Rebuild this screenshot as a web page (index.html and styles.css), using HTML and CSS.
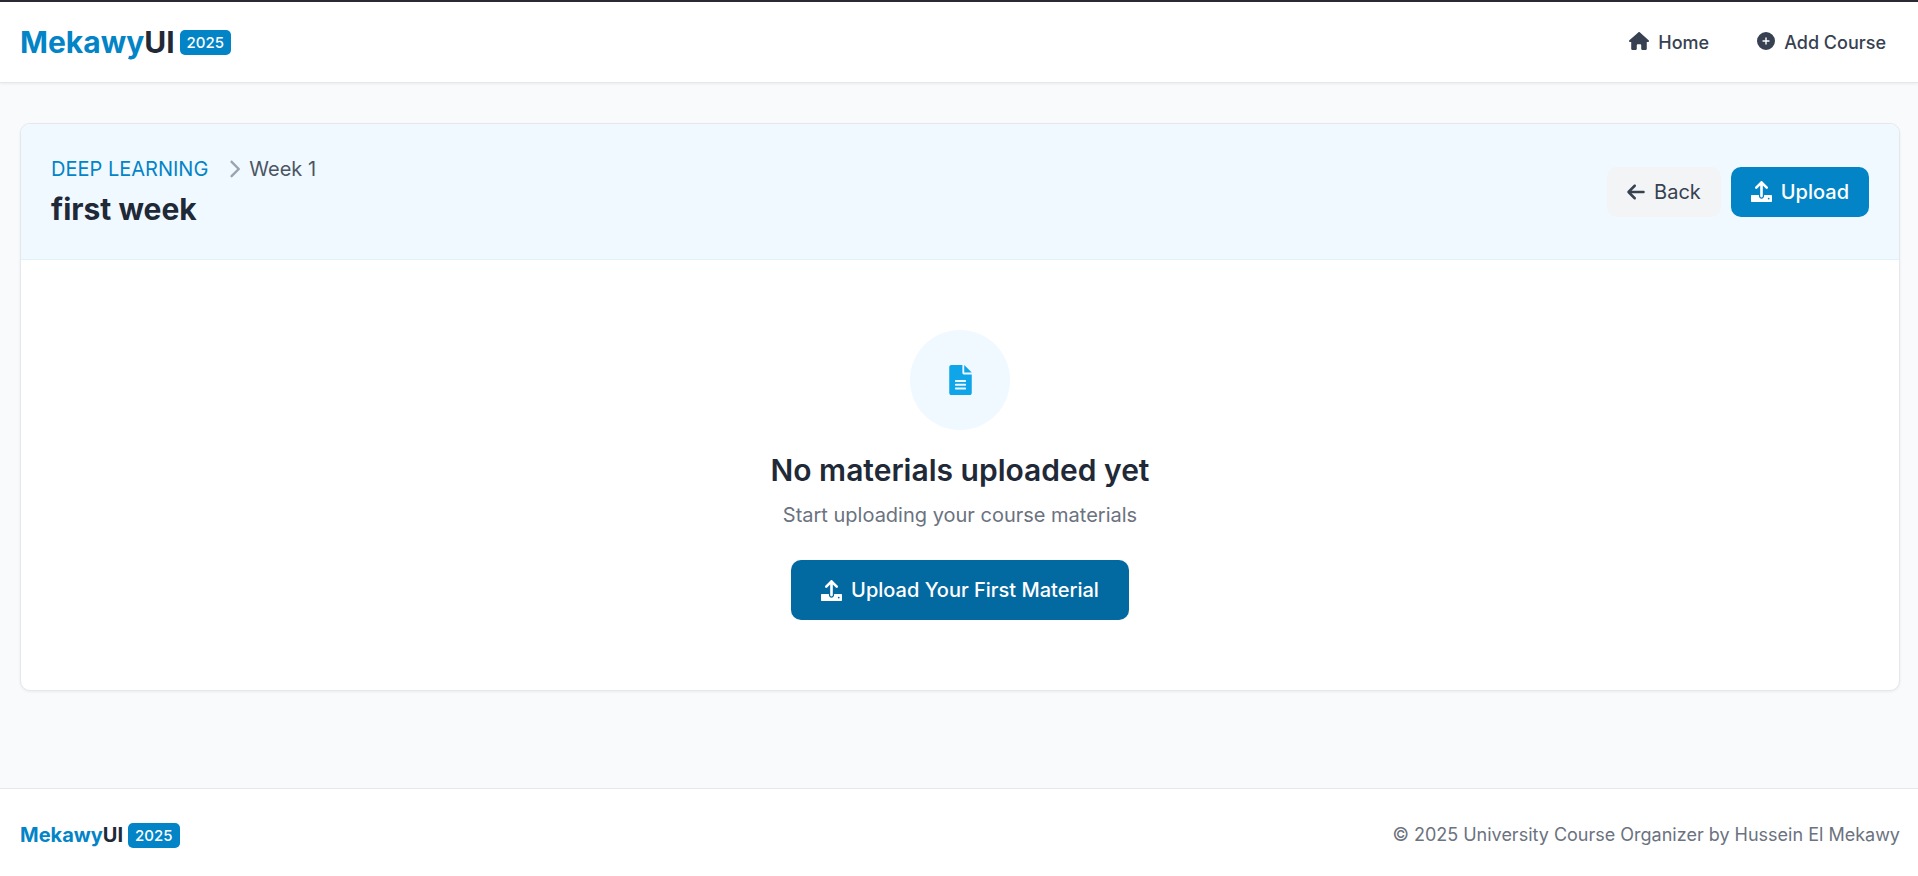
FILE: index.html
```html
<!DOCTYPE html>
<html lang="en">
<head>
<meta charset="utf-8">
<title>first week - MekawyUI</title>
<link rel="stylesheet" href="styles.css">
</head>
<body>
<header class="site-header">
  <a class="brand" href="#"><span class="brand-name"><span class="brand-accent">Mekawy</span>UI</span><span class="badge">2025</span></a>
  <nav class="nav">
    <a class="nav-link" href="#"><svg class="icon-home" viewBox="0 0 576 512" aria-hidden="true"><path d="M575.8 255.5c0 18-15 32.100-32 32.100h-32V488c0 13-11 24-24 24H376c-13 0-24-11-24-24V376c0-13-11-24-24-24h-80c-13 0-24 11-24 24v112c0 13-11 24-24 24H88c-13 0-24-11-24-24V287.600H32c-18 0-32-14-32-32.100 0-9 3-17 10-24L266.400 8c7-7 15-8 22-8s15 2 21 7l255.400 224.500c8 7 12 15 11 24z"/></svg>Home</a>
    <a class="nav-link" href="#"><svg class="icon-small" viewBox="0 0 512 512" aria-hidden="true"><path d="M256 512a256 256 0 1 0 0-512 256 256 0 1 0 0 512zM236 340v-64h-64a20 20 0 0 1 0-40h64v-64a20 20 0 0 1 40 0v64h64a20 20 0 0 1 0 40h-64v64a20 20 0 0 1-40 0z"/></svg>Add Course</a>
  </nav>
</header>
<main class="main">
  <section class="card">
    <div class="card-header">
      <div>
        <nav class="breadcrumb" aria-label="Breadcrumb"><a class="crumb-link" href="#">DEEP LEARNING</a><svg class="icon-chevron" viewBox="0 0 320 512" aria-hidden="true"><path d="M310.600 233.400c12.500 12.500 12.500 32.800 0 45.300l-192 192c-12.500 12.500-32.800 12.500-45.300 0s-12.500-32.800 0-45.300L242.700 256 73.400 86.600c-12.500-12.500-12.500-32.800 0-45.300s32.800-12.500 45.300 0l192 192z"/></svg><span>Week 1</span></nav>
        <h1 class="title">first week</h1>
      </div>
      <div class="actions">
        <a class="button button-plain" href="#"><svg class="icon-arrow" viewBox="0 0 448 512" aria-hidden="true"><path d="M9.400 233.400c-12.500 12.500-12.500 32.800 0 45.300l160 160c12.500 12.500 32.800 12.500 45.300 0s12.500-32.800 0-45.300L109.200 288H416c17.700 0 32-14.300 32-32s-14.300-32-32-32H109.300L214.600 118.600c12.500-12.500 12.500-32.800 0-45.300s-32.800-12.500-45.300 0l-160 160z"/></svg>Back</a>
        <button class="button button-primary" type="button"><svg class="icon" viewBox="0 0 512 512" aria-hidden="true"><path d="M288 109.300V368c0 17.700-14.300 32-32 32s-32-14.300-32-32V109.300l-73.400 73.400c-12.500 12.500-32.800 12.500-45.300 0s-12.500-32.800 0-45.300l128-128c12.500-12.500 32.800-12.500 45.300 0l128 128c12.500 12.500 12.500 32.800 0 45.300s-32.800 12.500-45.300 0L288 109.300zM24 344H192v24c0 35.300 28.700 64 64 64s64-28.700 64-64v-24H488c13.300 0 24 10.700 24 24v120c0 13.300-10.700 24-24 24H24c-13.300 0-24-10.700-24-24V368c0-13.300 10.700-24 24-24zM432 450a22 22 0 1 0 0-44 22 22 0 1 0 0 44z"/></svg>Upload</button>
      </div>
    </div>
    <div class="empty">
      <div class="empty-icon"><svg class="icon-file" viewBox="0 0 384 512" aria-hidden="true"><path d="M36 0C16 0 0 16 0 36V476c0 20 16 36 36 36H348c20 0 36-16 36-36V160H248c-13 0-24-11-24-24V0H36zM256 0V128H384L256 0zM112 256H272a16 16 0 0 1 0 32H112a16 16 0 0 1 0-32zm0 64H272a16 16 0 0 1 0 32H112a16 16 0 0 1 0-32zm0 64H272a16 16 0 0 1 0 32H112a16 16 0 0 1 0-32z"/></svg></div>
      <h2 class="empty-title">No materials uploaded yet</h2>
      <p class="empty-text">Start uploading your course materials</p>
      <button class="button button-large" type="button"><svg class="icon" viewBox="0 0 512 512" aria-hidden="true"><path d="M288 109.300V368c0 17.700-14.300 32-32 32s-32-14.300-32-32V109.300l-73.400 73.400c-12.500 12.500-32.800 12.500-45.300 0s-12.500-32.800 0-45.300l128-128c12.500-12.500 32.800-12.500 45.300 0l128 128c12.500 12.500 12.500 32.800 0 45.300s-32.800 12.500-45.300 0L288 109.300zM24 344H192v24c0 35.300 28.700 64 64 64s64-28.700 64-64v-24H488c13.300 0 24 10.700 24 24v120c0 13.300-10.700 24-24 24H24c-13.300 0-24-10.700-24-24V368c0-13.300 10.700-24 24-24zM432 450a22 22 0 1 0 0-44 22 22 0 1 0 0 44z"/></svg>Upload Your First Material</button>
    </div>
  </section>
</main>
<footer class="site-footer">
  <a class="brand brand-small" href="#"><span class="brand-name"><span class="brand-accent">Mekawy</span>UI</span><span class="badge">2025</span></a>
  <p class="copyright">© 2025 University Course Organizer by Hussein El Mekawy</p>
</footer>
</body>
</html>
```
FILE: styles.css
```css
* { box-sizing: border-box; margin: 0; }
body {
  min-height: 100vh;
  display: flex;
  flex-direction: column;
  border-top: 2px solid #2b2a33;
  background: #f9fafb;
  color: #1f2937;
  font: 20px/30px Inter, "Liberation Sans", sans-serif;
}
a { color: inherit; text-decoration: none; }
svg { display: block; flex: none; fill: currentColor; }

.site-header {
  display: flex;
  align-items: center;
  justify-content: space-between;
  padding: 20px 18px 20px 20px;
  background: #fff;
  border-bottom: 1px solid #e5e7eb;
  box-shadow: 0 1px 3px rgb(0 0 0 / 6%);
}
.brand { display: flex; align-items: center; gap: 5px; font-size: 30px; line-height: 40px; font-weight: 700; }
.brand-accent { color: #0284c7; }
.brand-small { font-size: 20px; line-height: 30px; }
.badge {
  padding: 0 7px;
  border-radius: 5px;
  background: #0284c7;
  color: #fff;
  font-size: 15px;
  line-height: 25px;
  font-weight: 500;
}
.nav { display: flex; gap: 20px; }
.nav-link { display: flex; align-items: center; gap: 9px; padding: 2px 14px 0; color: #374151; font-size: 18px; line-height: 26px; font-weight: 500; }
.nav-link svg { margin-bottom: 4px; }
.icon-home { width: 20px; height: 18px; }
.icon-small { width: 18px; height: 18px; }

.main { flex: 1; padding: 40px 18px 40px 20px; }
.card { overflow: hidden; border: 1px solid #e5e7eb; border-radius: 10px; background: #fff; box-shadow: 0 1px 3px rgb(0 0 0 / 6%); }
.card-header {
  display: flex;
  align-items: center;
  justify-content: space-between;
  padding: 30px;
  background: #f0f9ff;
  border-bottom: 1px solid #e0f2fe;
}
.breadcrumb { display: flex; align-items: center; color: #4b5563; }
.crumb-link { margin-right: 20px; color: #0284c7; }
.icon-chevron { width: 12px; height: 20px; margin-right: 9px; color: #9ca3af; }
.title { margin-top: 5px; font-size: 30px; line-height: 40px; font-weight: 700; }
.actions { display: flex; gap: 10px; }
.button { display: inline-flex; align-items: center; gap: 9px; padding: 10px 20px; border: 0; border-radius: 10px; font: inherit; }
.button-plain { background: #f3f4f6; color: #374151; }
.button-primary { background: #0284c7; color: #fff; font-weight: 500; }
.button-large { padding: 15px 30px; background: #0369a1; color: #fff; font-weight: 500; }
.icon { width: 21px; height: 21px; }
.icon-arrow { width: 18px; height: 20px; }

.empty { display: flex; flex-direction: column; align-items: center; padding: 70px 30px; }
.empty-icon { display: grid; place-items: center; width: 100px; height: 100px; margin-bottom: 20px; border-radius: 50%; background: #f0f9ff; color: #0ea5e9; }
.icon-file { width: 23px; height: 30px; }
.empty-title { margin-bottom: 10px; font-size: 30px; line-height: 40px; font-weight: 600; }
.empty-text { margin-bottom: 30px; color: #6b7280; }

.site-footer { display: flex; align-items: center; justify-content: space-between; padding: 31px 18px 26px 20px; border-top: 1px solid #e5e7eb; background: #fff; }
.copyright { color: #6b7280; font-size: 18px; line-height: 26px; }
```
